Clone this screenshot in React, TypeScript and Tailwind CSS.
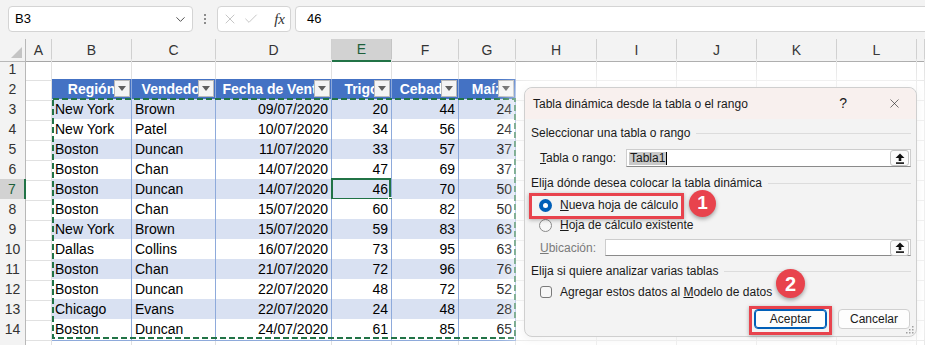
import { ChevronDown, X, Check } from "lucide-react";

const GRID =
  "grid grid-cols-[26px_26px_80px_84px_116px_60px_67px_57px_81px_80px_80px_80px_80px_1fr] h-[20px]";

const LETTERS = ["A", "B", "C", "D", "E", "F", "G", "H", "I", "J", "K", "L", ""];
const HEADERS = ["Región", "Vendedor", "Fecha de Venta", "Trigo", "Cebada", "Maíz"];

const DATA: [string, string, string, number, number, number][] = [
  ["New York", "Brown", "09/07/2020", 20, 44, 24],
  ["New York", "Patel", "10/07/2020", 34, 56, 24],
  ["Boston", "Duncan", "11/07/2020", 33, 57, 37],
  ["Boston", "Chan", "14/07/2020", 47, 69, 37],
  ["Boston", "Duncan", "14/07/2020", 46, 70, 50],
  ["Boston", "Chan", "15/07/2020", 60, 82, 50],
  ["New York", "Brown", "15/07/2020", 59, 83, 63],
  ["Dallas", "Collins", "16/07/2020", 73, 95, 63],
  ["Boston", "Chan", "21/07/2020", 72, 96, 76],
  ["Boston", "Duncan", "22/07/2020", 48, 72, 52],
  ["Chicago", "Evans", "22/07/2020", 24, 48, 28],
  ["Boston", "Duncan", "24/07/2020", 61, 85, 65],
];

function Blank() {
  return <div className="border-r border-b border-[#e1e1e1]" />;
}

function HeadCell({ label }: { label: string }) {
  return (
    <div className="relative bg-[#4472c4] border-r border-b border-[#8eaadb] overflow-hidden">
      <div className="h-full flex items-center justify-center font-bold text-white whitespace-nowrap">
        {label}
      </div>
      <div className="absolute right-[1px] top-[1px] w-[16px] h-[17px] bg-[#f4f4f4] border border-[#b9b9b9] flex items-center justify-center">
        <svg width="8" height="5" viewBox="0 0 8 5">
          <path d="M0 0h8L4 5z" fill="#5f5f5f" />
        </svg>
      </div>
    </div>
  );
}

function DataCell({ v, band, right, active }: { v: string | number; band: boolean; right?: boolean; active?: boolean }) {
  return (
    <div
      className={`relative border-r border-b border-[#8eaadb] flex items-center px-[3px] whitespace-nowrap overflow-visible ${
        band ? "bg-[#d9e1f2]" : "bg-white"
      } ${right ? "justify-end" : "justify-start"}`}
    >
      {v}
      {active && (
        <>
          <div className="absolute -left-[1px] -top-[1px] right-0 bottom-0 border-2 border-[#217346]" />
          <div className="absolute -right-[3px] -bottom-[3px] w-[6px] h-[6px] bg-[#217346] border border-white" />
        </>
      )}
    </div>
  );
}

function SheetRow({ r }: { r: number }) {
  const sel = r === 7;
  const d = r >= 3 && r <= 14 ? DATA[r - 3] : null;
  const band = r % 2 === 1;
  return (
    <div className={GRID}>
      <div
        className={`flex items-center justify-center border-b border-[#d6d6d6] ${
          sel ? "bg-[#d2d2d2] border-r-2 border-r-[#217346] text-[#1d5f3a]" : "bg-[#f3f3f3] border-r border-r-[#b8b8b8] text-[#333]"
        }`}
      >
        {r <= 14 ? r : ""}
      </div>
      <Blank />
      {r === 2
        ? HEADERS.map((h) => <HeadCell key={h} label={h} />)
        : d
        ? d.map((v, i) => <DataCell key={i} v={v} band={band} right={i >= 2} active={sel && i === 3} />)
        : [0, 1, 2, 3, 4, 5].map((i) => <Blank key={i} />)}
      {[0, 1, 2, 3, 4, 5].map((i) => (
        <Blank key={"x" + i} />
      ))}
    </div>
  );
}

function UpButton() {
  return (
    <div className="w-[19px] h-[16px] mr-[1px] rounded-[3px] border border-[#c4c4c4] bg-[#fbfbfb] flex items-center justify-center">
      <svg width="10" height="11" viewBox="0 0 10 11">
        <path d="M5 0.5L9.5 5H6.3v3H3.7V5H0.5z" fill="#111" />
        <rect x="1" y="9.3" width="8" height="1.6" fill="#111" />
      </svg>
    </div>
  );
}

function Section({ label }: { label: string }) {
  return (
    <div className="flex items-center gap-[6px] h-[16px]">
      <span className="whitespace-nowrap">{label}</span>
      <div className="flex-1 h-px bg-[#dcdcdc]" />
    </div>
  );
}

function Dialog() {
  return (
    <div className="absolute left-[524px] top-[87px] w-[393px] h-[250px] rounded-[8px] border border-[#cfcfcf] bg-[#f3f3f3] shadow-[0_0_26px_12px_rgba(255,255,255,0.75),0_2px_8px_rgba(0,0,0,0.12)] text-[12px] text-[#1a1a1a] font-['Liberation_Sans',Arial,sans-serif]">
      <div className="h-[31px] rounded-t-[8px] bg-[#f8f0ee] flex items-center pl-[8px]">
        <span className="text-[12px]">Tabla dinámica desde la tabla o el rango</span>
        <span className="ml-auto mr-[40px] text-[14px]">?</span>
        <X size={15} strokeWidth={1} className="mr-[14px] text-[#222]" />
      </div>
      <div className="pl-[6px] pr-[5px]">
        <div className="mt-[6px]">
          <Section label="Seleccionar una tabla o rango" />
        </div>
        <div className="mt-[8px] flex items-center h-[18px] pl-[9px]">
          <span className="w-[86px]">
            <u>T</u>abla o rango:
          </span>
          <div className="flex-1 h-[18px] bg-white border border-[#cdcdcd] border-b-[#8a8a8a] flex items-center pl-[2px]">
            <span className="bg-[#c9c9c9] px-[1px] leading-[13px]">Tabla1</span>
            <span className="w-px h-[13px] bg-black" />
            <span className="ml-auto">
              <UpButton />
            </span>
          </div>
        </div>
        <div className="mt-[8px]">
          <Section label="Elija dónde desea colocar la tabla dinámica" />
        </div>
        <div className="mt-[5px] flex items-center h-[18px] pl-[8px]">
          <div className="w-[13px] h-[13px] rounded-full bg-[#005fb8] flex items-center justify-center">
            <div className="w-[5px] h-[5px] rounded-full bg-white" />
          </div>
          <span className="ml-[8px]">
            <u>N</u>ueva hoja de cálculo
          </span>
        </div>
        <div className="mt-[2px] flex items-center h-[18px] pl-[8px]">
          <div className="w-[13px] h-[13px] rounded-full border border-[#8a8a8a] bg-[#f7f7f7]" />
          <span className="ml-[8px]">
            <u>H</u>oja de cálculo existente
          </span>
        </div>
        <div className="mt-[5px] flex items-center h-[17px] pl-[9px]">
          <span className="w-[65px] text-[#7a7a7a]">
            <u>U</u>bicación:
          </span>
          <div className="flex-1 h-[17px] bg-white border border-[#cdcdcd] border-b-[#8a8a8a] flex items-center justify-end">
            <UpButton />
          </div>
        </div>
        <div className="mt-[7px]">
          <Section label="Elija si quiere analizar varias tablas" />
        </div>
        <div className="mt-[5px] flex items-center h-[16px] pl-[9px]">
          <div className="w-[12px] h-[12px] rounded-[3px] border border-[#7a7a7a] bg-[#f7f7f7]" />
          <span className="ml-[8px]">
            Agregar estos datos al <u>M</u>odelo de datos
          </span>
        </div>
        <div className="mt-[9px] flex justify-end gap-[11px] pr-[1px]">
          <button className="w-[73px] h-[20px] rounded-[4px] bg-[#fdfdfd] border border-[#005fb8] shadow-[inset_0_0_0_1px_#005fb8]">
            Aceptar
          </button>
          <button className="w-[72px] h-[20px] rounded-[4px] bg-[#fdfdfd] border border-[#d0d0d0]">Cancelar</button>
        </div>
      </div>
      <svg className="absolute right-[2px] bottom-[2px]" width="8" height="8" viewBox="0 0 8 8">
        <g fill="#a0a0a0">
          <rect x="6" y="0" width="1.5" height="1.5" />
          <rect x="3" y="3" width="1.5" height="1.5" />
          <rect x="6" y="3" width="1.5" height="1.5" />
          <rect x="0" y="6" width="1.5" height="1.5" />
          <rect x="3" y="6" width="1.5" height="1.5" />
          <rect x="6" y="6" width="1.5" height="1.5" />
        </g>
      </svg>
      {/* callouts */}
      <div className="absolute left-[4px] top-[105px] w-[155px] h-[26px] border-[3px] border-[#e8434d] shadow-[0_1px_4px_rgba(0,0,0,0.3)]" />
      <div className="absolute left-[164px] top-[102px] w-[27px] h-[27px] rounded-full bg-[#e8434d] shadow-[0_2px_4px_rgba(0,0,0,0.35)] flex items-center justify-center text-white text-[19px] font-bold">
        1
      </div>
      <div className="absolute left-[224px] top-[218px] w-[83px] h-[29px] border-[3px] border-[#e8434d] shadow-[0_1px_4px_rgba(0,0,0,0.3)]" />
      <div className="absolute left-[251px] top-[181px] w-[29px] h-[29px] rounded-full bg-[#e8434d] shadow-[0_2px_4px_rgba(0,0,0,0.35)] flex items-center justify-center text-white text-[20px] font-bold">
        2
      </div>
    </div>
  );
}

export default function App() {
  return (
    <div className="relative w-[925px] h-[345px] overflow-hidden bg-white font-['Liberation_Sans',Arial,sans-serif] text-[14px] text-black">
      {/* formula bar */}
      <div className="h-[39px] bg-[#f3f3f3] flex items-start pt-[6px] pl-[8px] gap-[4px] text-[13px]">
        <div className="w-[185px] h-[26px] bg-white border border-[#d4d4d4] rounded-[4px] flex items-center pl-[6px] pr-[4px]">
          <span>B3</span>
          <ChevronDown size={15} strokeWidth={1.5} className="ml-auto text-[#444]" />
        </div>
        <div className="w-[16px] h-[26px] flex flex-col items-center justify-center gap-[2px]">
          <div className="w-[2px] h-[2px] bg-[#8c8c8c]" />
          <div className="w-[2px] h-[2px] bg-[#8c8c8c]" />
          <div className="w-[2px] h-[2px] bg-[#8c8c8c]" />
        </div>
        <div className="w-[74px] h-[26px] bg-white border border-[#d4d4d4] rounded-[4px] flex items-center pl-[4px] gap-[5px]">
          <X size={16} strokeWidth={1.2} className="text-[#b8b8b8]" />
          <Check size={16} strokeWidth={1.2} className="text-[#b8b8b8]" />
          <span className="ml-auto mr-[5px] font-['Liberation_Serif',serif] italic text-[15px] text-[#333]">fx</span>
        </div>
        <div className="flex-1 h-[26px] bg-white border border-[#d4d4d4] rounded-l-[4px] -mr-[4px] flex items-center pl-[11px]">
          46
        </div>
      </div>
      {/* sheet */}
      <div className="relative">
        <div className={GRID}>
          <div className="relative bg-[#f3f3f3] border-r border-b border-[#b8b8b8]">
            <svg className="absolute right-[3px] bottom-[3px]" width="11" height="11" viewBox="0 0 11 11">
              <path d="M11 0V11H0z" fill="#c4c4c4" />
            </svg>
          </div>
          {LETTERS.map((l, i) =>
            l === "E" ? (
              <div key={i} className="bg-[#d2d2d2] border-r border-r-[#c4c4c4] border-b-2 border-b-[#217346] flex items-center justify-center text-[#1d5f3a]">
                {l}
              </div>
            ) : (
              <div key={i} className="bg-[#f3f3f3] border-r border-r-[#d0d0d0] border-b border-b-[#a6a6a6] flex items-center justify-center text-[#333]">
                {l}
              </div>
            )
          )}
        </div>
        {Array.from({ length: 15 }, (_, i) => (
          <SheetRow key={i} r={i + 1} />
        ))}
        <svg className="absolute left-[51px] top-[58px]" width="466" height="243" viewBox="0 0 466 243">
          <rect x="2" y="2" width="462" height="239" fill="none" stroke="#217346" strokeWidth="2" strokeDasharray="6 3" />
        </svg>
      </div>
      <Dialog />
    </div>
  );
}
